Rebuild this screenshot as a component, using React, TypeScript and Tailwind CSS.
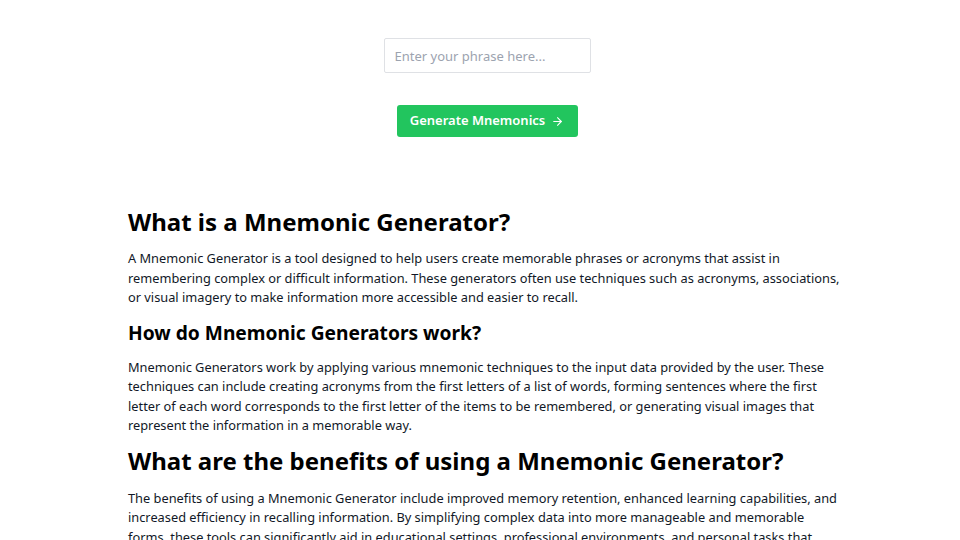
import { ArrowRight } from 'lucide-react'

const FONT = "font-['Noto_Sans',sans-serif]"

const Section = ({ children }: { children: React.ReactNode }): React.ReactElement => (
  <p className="text-[12.8px] leading-[19.5px] text-[#111827] mb-[11px]">{children}</p>
)

export default function App(): React.ReactElement {
  return (
    <div className={`${FONT} min-h-[540px] bg-white text-black`}>
      {/* generator form */}
      <div className="flex flex-col items-center pt-[38px] pl-[14px]">
        <input
          type="text"
          placeholder="Enter your phrase here..."
          className="w-[207px] h-[35px] px-[10px] text-[13px] border border-[#dfe1e5] rounded-[2px] placeholder:text-[#9ca3af] outline-none"
        />
        <button className="mt-[32px] h-[32px] w-[181px] flex items-center justify-center gap-[6px] rounded-[3px] bg-[#22c55e] text-white text-[13px] font-semibold">
          Generate Mnemonics
          <ArrowRight size={13} strokeWidth={2} />
        </button>
      </div>

      {/* info content */}
      <div className="w-[720px] mx-auto pl-2 mt-[69px]">
        <h1 className="text-[24px] leading-[32px] font-bold mb-[11px]">What is a Mnemonic Generator?</h1>
        <Section>
          A Mnemonic Generator is a tool designed to help users create memorable phrases or acronyms that assist in
          remembering complex or difficult information. These generators often use techniques such as acronyms,
          associations, or visual imagery to make information more accessible and easier to recall.
        </Section>
        <h2 className="text-[19.2px] leading-[28px] font-bold mb-[11px]">How do Mnemonic Generators work?</h2>
        <Section>
          Mnemonic Generators work by applying various mnemonic techniques to the input data provided by the user. These
          techniques can include creating acronyms from the first letters of a list of words, forming sentences where the
          first letter of each word corresponds to the first letter of the items to be remembered, or generating visual
          images that represent the information in a memorable way.
        </Section>
        <h1 className="text-[24px] leading-[32px] font-bold -mt-[2px] mb-[12px]">
          What are the benefits of using a Mnemonic Generator?
        </h1>
        <Section>
          The benefits of using a Mnemonic Generator include improved memory retention, enhanced learning capabilities,
          and increased efficiency in recalling information. By simplifying complex data into more manageable and
          memorable forms, these tools can significantly aid in educational settings, professional environments, and
          personal tasks that require memorization of information.
        </Section>
      </div>
    </div>
  )
}
